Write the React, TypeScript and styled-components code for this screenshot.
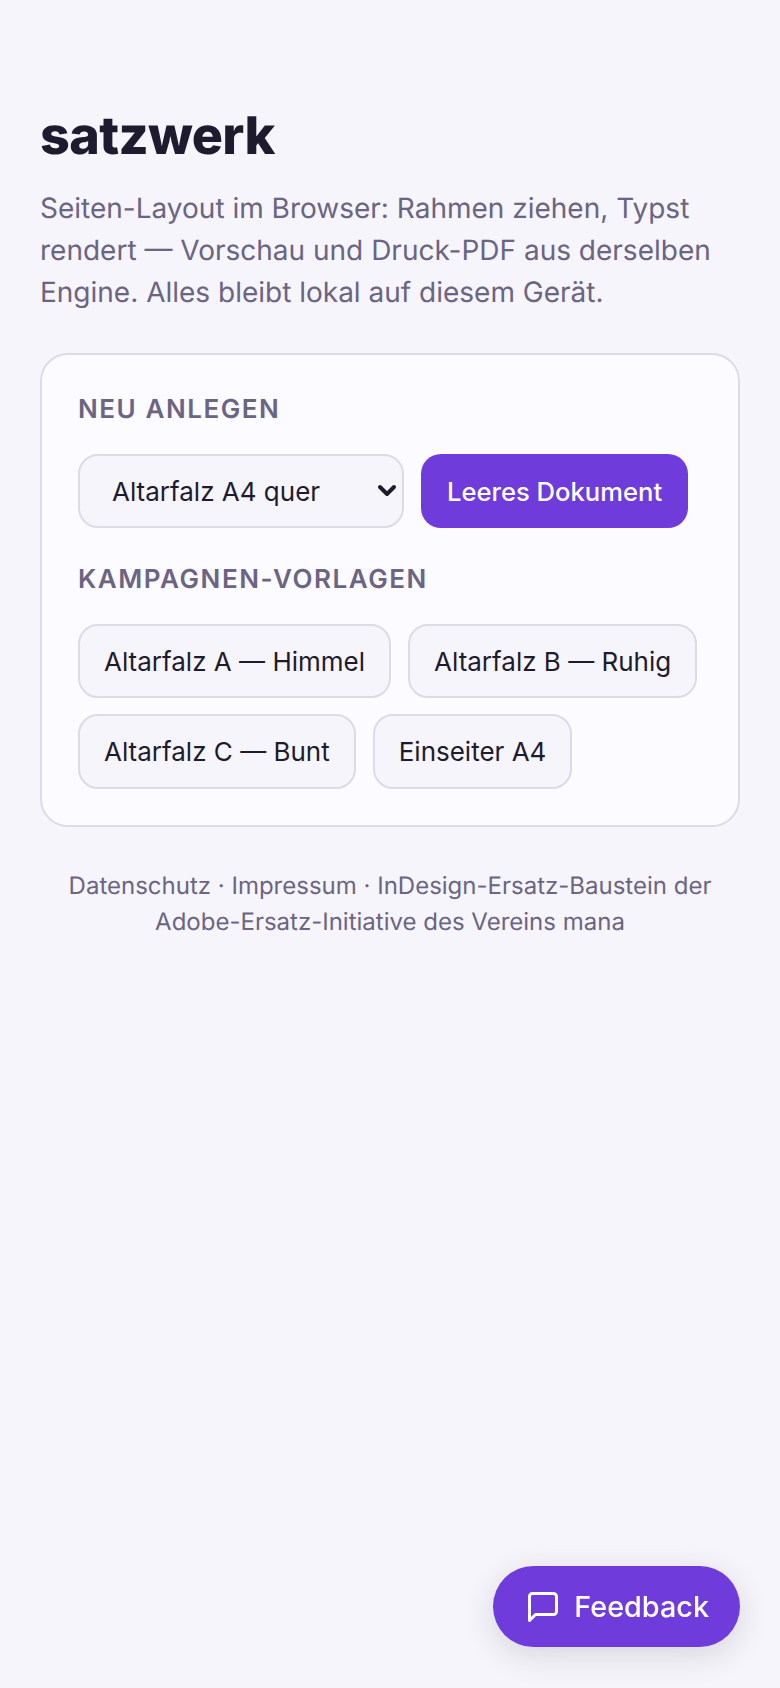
import React from 'react'
import styled, { createGlobalStyle } from 'styled-components'

const GlobalStyle = createGlobalStyle`
  html, body {
    margin: 0;
    padding: 0;
    background: #f6f5fb;
  }
  body {
    font-family: Inter, "Noto Sans", sans-serif;
    color: #1f1b2e;
    text-rendering: geometricPrecision;
  }
  * {
    box-sizing: border-box;
  }
`

const Page = styled.main`
  min-height: 1688px;
  padding: 104px 40px 40px;
`

const Title = styled.h1`
  margin: 0 0 20px;
  font-size: 52px;
  line-height: 63px;
  font-weight: 800;
  letter-spacing: -0.6px;
  color: #1f1b2e;
`

const Lead = styled.p`
  margin: 0 0 40px;
  font-size: 28px;
  line-height: 42px;
  color: #6b6483;
`

const Card = styled.section`
  width: 700px;
  padding: 39px 36px 36px;
  background: #fcfbff;
  border: 2px solid #dcdbe6;
  border-radius: 28px;
`

const SectionLabel = styled.h2`
  margin: 0 0 28px;
  font-size: 26px;
  line-height: 32px;
  font-weight: 600;
  letter-spacing: 0.06em;
  text-transform: uppercase;
  color: #6b6483;
`

const Row = styled.div<{ $last?: boolean }>`
  display: flex;
  flex-wrap: wrap;
  gap: 16px 17px;
  margin-bottom: ${({ $last }) => ($last ? '0' : '36px')};
`

const SelectWrap = styled.div`
  position: relative;
  display: flex;
  color: #1f1b2e;
`

const TemplateSelect = styled.select`
  appearance: none;
  width: 326px;
  height: 74px;
  padding: 0 32px;
  font: 400 26px Inter, sans-serif;
  color: #1f1b2e;
  background: #f6f5fb;
  border: 2px solid #dcdbe6;
  border-radius: 20px;
`

const SelectArrow = styled.svg`
  position: absolute;
  right: 7px;
  top: 29px;
  width: 20px;
  height: 15px;
  pointer-events: none;
`

const PrimaryButton = styled.button`
  height: 74px;
  padding: 0 26px;
  font: 500 25.6px Inter, sans-serif;
  color: #ffffff;
  background: #6f3bdb;
  border: none;
  border-radius: 20px;
`

const TemplateButton = styled.button`
  height: 74px;
  padding: 0 24px;
  font: 400 26px Inter, sans-serif;
  color: #1f1b2e;
  background: #f6f5fb;
  border: 2px solid #dcdbe6;
  border-radius: 20px;

  &:nth-child(n + 3) {
    height: 75px;
  }
`

const Footer = styled.footer`
  margin-top: 41px;
  font-size: 24px;
  line-height: 36px;
  text-align: center;
  color: #6b6483;
`

const FeedbackButton = styled.button`
  position: fixed;
  right: 40px;
  bottom: 41px;
  display: flex;
  align-items: center;
  gap: 13px;
  height: 81px;
  padding: 0 31px 0 32px;
  font: 500 28.8px Inter, sans-serif;
  color: #ffffff;
  background: #6f3bdb;
  border: none;
  border-radius: 41px;
  box-shadow: 0 8px 32px rgba(31, 27, 46, 0.14);
`

const templates = ['Altarfalz A — Himmel', 'Altarfalz B — Ruhig', 'Altarfalz C — Bunt', 'Einseiter A4']

const FeedbackIcon = () => (
  <svg width="36" height="36" viewBox="0 0 24 24" fill="none" stroke="currentColor" strokeWidth="2" strokeLinecap="round" strokeLinejoin="round">
    <path d="M21 15a2 2 0 0 1-2 2H7l-4 4V5a2 2 0 0 1 2-2h14a2 2 0 0 1 2 2z" />
  </svg>
)

export default function App() {
  return (
    <Page>
      <GlobalStyle />
      <Title>satzwerk</Title>
      <Lead>
        Seiten-Layout im Browser: Rahmen ziehen, Typst rendert — Vorschau und Druck-PDF aus derselben Engine. Alles
        bleibt lokal auf diesem Gerät.
      </Lead>
      <Card>
        <SectionLabel>Neu anlegen</SectionLabel>
        <Row>
          <SelectWrap>
            <TemplateSelect defaultValue="a4">
              <option value="a4">Altarfalz A4 quer</option>
            </TemplateSelect>
            <SelectArrow viewBox="0 0 20 15" fill="none" stroke="currentColor" strokeWidth="4" strokeLinecap="round" strokeLinejoin="round">
              <path d="M3 4l7 7 7-7" />
            </SelectArrow>
          </SelectWrap>
          <PrimaryButton>Leeres Dokument</PrimaryButton>
        </Row>
        <SectionLabel>Kampagnen-Vorlagen</SectionLabel>
        <Row $last>
          {templates.map(name => (
            <TemplateButton key={name}>{name}</TemplateButton>
          ))}
        </Row>
      </Card>
      <Footer>Datenschutz · Impressum · InDesign-Ersatz-Baustein der Adobe-Ersatz-Initiative des Vereins mana</Footer>
      <FeedbackButton>
        <FeedbackIcon />
        Feedback
      </FeedbackButton>
    </Page>
  )
}
